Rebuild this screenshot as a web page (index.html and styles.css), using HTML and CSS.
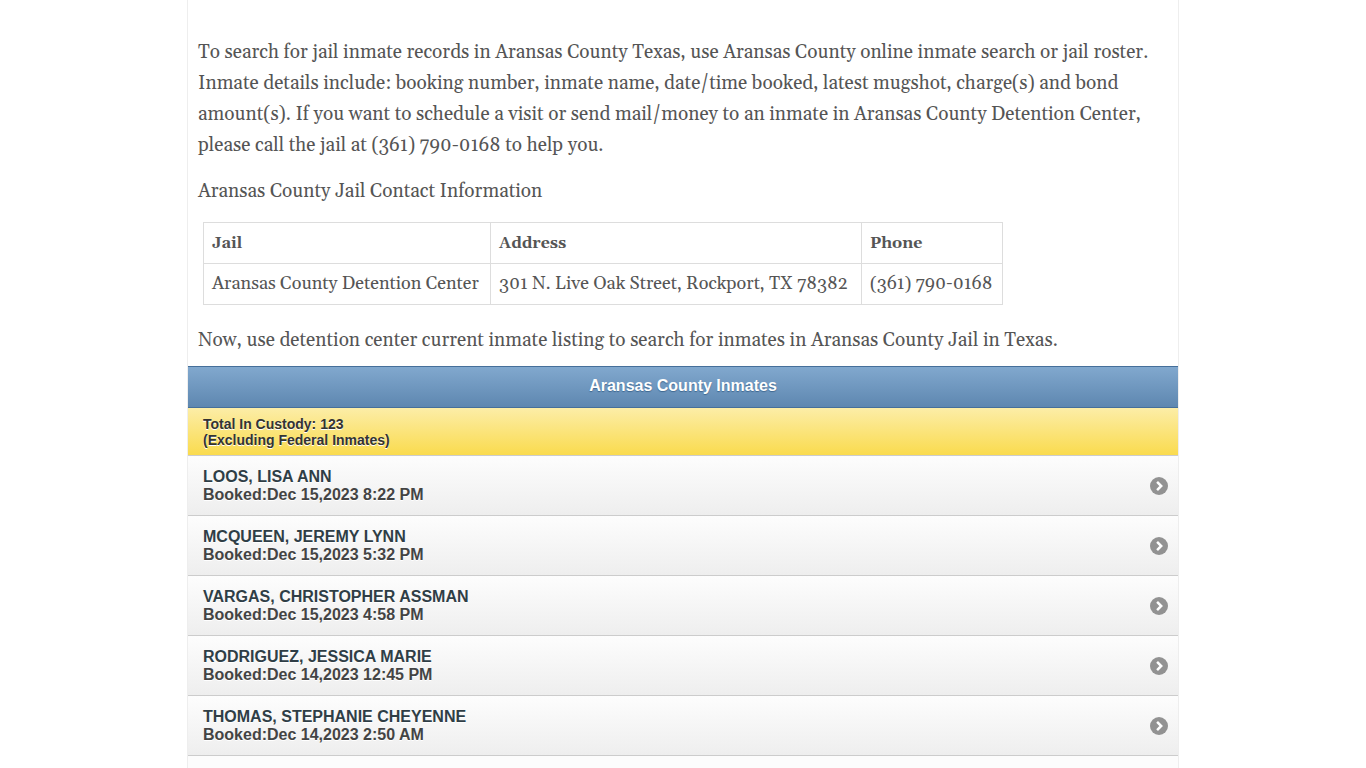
FILE: index.html
```html
<!DOCTYPE html>
<html lang="en">
<head>
<meta charset="utf-8">
<meta name="viewport" content="width=device-width, initial-scale=1">
<title>Aransas County Inmates</title>
<link rel="stylesheet" href="styles.css">
</head>
<body>
<svg class="sprite" aria-hidden="true">
  <symbol id="arrow" viewBox="0 0 18 18">
    <circle cx="9" cy="9" r="9" fill="#929292"/>
    <path d="M7.1 4.9 11.2 9l-4.1 4.1" fill="none" stroke="#fff" stroke-width="2.5"/>
  </symbol>
</svg>
<main class="page">
  <article class="article">
    <p class="text">To search for jail inmate records in Aransas County Texas, use Aransas County online inmate search or jail roster. Inmate details include: booking number, inmate name, date/time booked, latest mugshot, charge(s) and bond amount(s). If you want to schedule a visit or send mail/money to an inmate in Aransas County Detention Center, please call the jail at (361) 790-0168 to help you.</p>
    <p class="text">Aransas County Jail Contact Information</p>
    <table class="contact">
      <thead>
        <tr><th class="col-jail" scope="col">Jail</th><th class="col-address" scope="col">Address</th><th scope="col">Phone</th></tr>
      </thead>
      <tbody>
        <tr><td>Aransas County Detention Center</td><td>301 N. Live Oak Street, Rockport, TX 78382</td><td>(361) 790-0168</td></tr>
      </tbody>
    </table>
    <p class="text">Now, use detention center current inmate listing to search for inmates in Aransas County Jail in Texas.</p>
  </article>
  <section class="roster">
    <h1 class="roster-title">Aransas County Inmates</h1>
    <p class="total">Total In Custody: 123<br>(Excluding Federal Inmates)</p>
    <ul class="inmates">
      <li><a class="inmate" href="#"><span class="who"><span class="name">LOOS, LISA ANN</span><span>Booked:Dec 15,2023 8:22 PM</span></span><svg class="arrow" aria-hidden="true"><use href="#arrow"/></svg></a></li>
      <li><a class="inmate" href="#"><span class="who"><span class="name">MCQUEEN, JEREMY LYNN</span><span>Booked:Dec 15,2023 5:32 PM</span></span><svg class="arrow" aria-hidden="true"><use href="#arrow"/></svg></a></li>
      <li><a class="inmate" href="#"><span class="who"><span class="name">VARGAS, CHRISTOPHER ASSMAN</span><span>Booked:Dec 15,2023 4:58 PM</span></span><svg class="arrow" aria-hidden="true"><use href="#arrow"/></svg></a></li>
      <li><a class="inmate" href="#"><span class="who"><span class="name">RODRIGUEZ, JESSICA MARIE</span><span>Booked:Dec 14,2023 12:45 PM</span></span><svg class="arrow" aria-hidden="true"><use href="#arrow"/></svg></a></li>
      <li><a class="inmate" href="#"><span class="who"><span class="name">THOMAS, STEPHANIE CHEYENNE</span><span>Booked:Dec 14,2023 2:50 AM</span></span><svg class="arrow" aria-hidden="true"><use href="#arrow"/></svg></a></li>
    </ul>
    <div class="list-end"></div>
  </section>
</main>
</body>
</html>
```
FILE: styles.css
```css
* { box-sizing: border-box; }

body {
  margin: 0;
  background: #fff;
  color: #555;
}

.sprite {
  display: none;
}

.page {
  display: flex;
  flex-direction: column;
  max-width: 992px;
  min-height: 100vh;
  margin: 0 auto;
  border: 1px solid #eee;
  border-width: 0 1px;
}

.article {
  padding: 37px 10px 10px;
  font-family: Georgia, Gelasio, "Liberation Serif", serif;
}

.text {
  margin: 0 0 15px;
  font-size: 19px;
  line-height: 31px;
}

.text:last-child {
  margin: 0;
}

.contact {
  width: 100%;
  max-width: 800px;
  margin: 0 5px 20px;
  border-collapse: collapse;
  font-size: 18px;
  line-height: 24px;
}

.contact th,
.contact td {
  padding: 8px;
  border: 1px solid #ddd;
  text-align: left;
}

.contact th {
  font-size: 16px;
}

.contact .col-jail { width: 287px; }
.contact .col-address { width: 371px; }

.roster {
  display: flex;
  flex: 1;
  flex-direction: column;
  font-family: "Liberation Sans", Arial, sans-serif;
  font-weight: bold;
}

.roster-title {
  margin: 0;
  padding: 9px 16px 11px;
  border: 1px solid #456f9a;
  border-width: 1px 0;
  background: linear-gradient(#81a8ce, #5e87b0);
  color: #fff;
  font-size: 16px;
  line-height: 20px;
  text-align: center;
  text-shadow: 0 1px 1px #3e6790;
}

.total {
  margin: 0;
  padding: 8px 15px 7px;
  border-bottom: 1px solid #ccc;
  background: linear-gradient(#fceda7, #fadb4e);
  color: #333;
  font-size: 14px;
  line-height: 16px;
  text-shadow: 0 1px 0 #fff;
}

.inmates {
  margin: 0;
  padding: 0;
  list-style: none;
}

.inmate {
  display: flex;
  align-items: center;
  justify-content: space-between;
  padding: 12px 10px 11px 15px;
  border-bottom: 1px solid #ccc;
  background: linear-gradient(#fdfdfd, #eee);
  color: #444;
  font-size: 16px;
  line-height: 18px;
  text-decoration: none;
  text-shadow: 0 1px 0 #fff;
}

.who {
  display: flex;
  flex-direction: column;
}

.name {
  color: #2f3e46;
}

.arrow {
  width: 18px;
  height: 18px;
}

.list-end {
  flex: 1;
  background: #fcfcfc;
}
```
